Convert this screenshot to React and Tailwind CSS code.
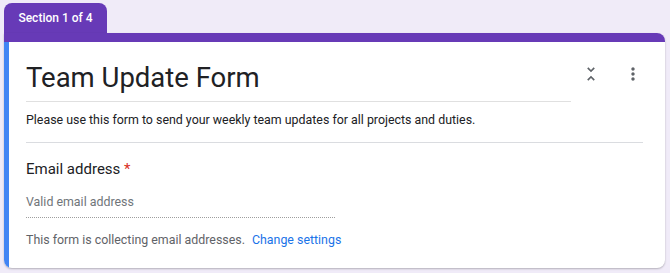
import React from "react";

const UnfoldLess = () => (
  <svg viewBox="0 0 24 24" className="w-[20px] h-[20px]" fill="#5f6368">
    <path d="M7.41 18.59L8.83 20 12 16.83 15.17 20l1.41-1.41L12 14l-4.59 4.59zm9.18-13.18L15.17 4 12 7.17 8.83 4 7.41 5.41 12 10l4.59-4.59z" />
  </svg>
);

const MoreVert = () => (
  <svg viewBox="0 0 24 24" className="w-[20px] h-[20px]" fill="#5f6368">
    <path d="M12 8c1.1 0 2-.9 2-2s-.9-2-2-2-2 .9-2 2 .9 2 2 2zm0 2c-1.1 0-2 .9-2 2s.9 2 2 2 2-.9 2-2-.9-2-2-2zm0 6c-1.1 0-2 .9-2 2s.9 2 2 2 2-.9 2-2-.9-2-2-2z" />
  </svg>
);

export default function App() {
  return (
    <div className="min-h-[273px] bg-[#f0ebf8] pl-[4px] pr-[5px] pt-[3px] font-['Roboto',sans-serif]">
      {/* Section tab */}
      <div className="w-[103px] h-[30px] rounded-t-[8px] bg-[#673ab7] flex items-center justify-center">
        <span className="text-[12px] font-medium text-white">Section 1 of 4</span>
      </div>

      {/* Card */}
      <div className="bg-white rounded-b-[8px] rounded-tr-[8px] overflow-hidden shadow-[0_1px_2px_rgba(0,0,0,0.25)]">
        <div className="h-[9px] bg-[#673ab7]" />
        <div className="flex">
          <div className="w-[5px] bg-[#4285f4]" />
          <div className="flex-1 pl-[17px] pr-[22px] pt-[18px] pb-[18px]">
            {/* Title row */}
            <div className="flex items-start">
              <div className="flex-1 border-b border-[#e0e0e0] pb-[5px]">
                <h1 className="text-[27.5px] leading-[36px] text-[#202124]">Team Update Form</h1>
              </div>
              <div className="ml-[10px] mt-[4px] flex items-center gap-[22px]">
                <UnfoldLess />
                <MoreVert />
              </div>
            </div>

            {/* Description */}
            <div className="border-b border-[#dadce0] pt-[8px] pb-[12px]">
              <p className="text-[12.4px] leading-[20px] text-[#202124]">
                Please use this form to send your weekly team updates for all projects and duties.
              </p>
            </div>

            {/* Email question */}
            <div className="pt-[14px]">
              <p className="text-[15px] leading-[24px] text-[#202124]">
                Email address <span className="text-[#d93025]">*</span>
              </p>
              <div className="mt-[8px] w-[309px] border-b border-dotted border-[#9e9e9e] pb-[4px]">
                <span className="text-[12.4px] leading-[20px] text-[#70757a]">Valid email address</span>
              </div>
              <p className="mt-[12px] text-[12.4px] leading-[20px] text-[#5f6368]">
                This form is collecting email addresses.
                <span className="ml-[7px] text-[#1a73e8]">Change settings</span>
              </p>
            </div>
          </div>
        </div>
      </div>
    </div>
  );
}
